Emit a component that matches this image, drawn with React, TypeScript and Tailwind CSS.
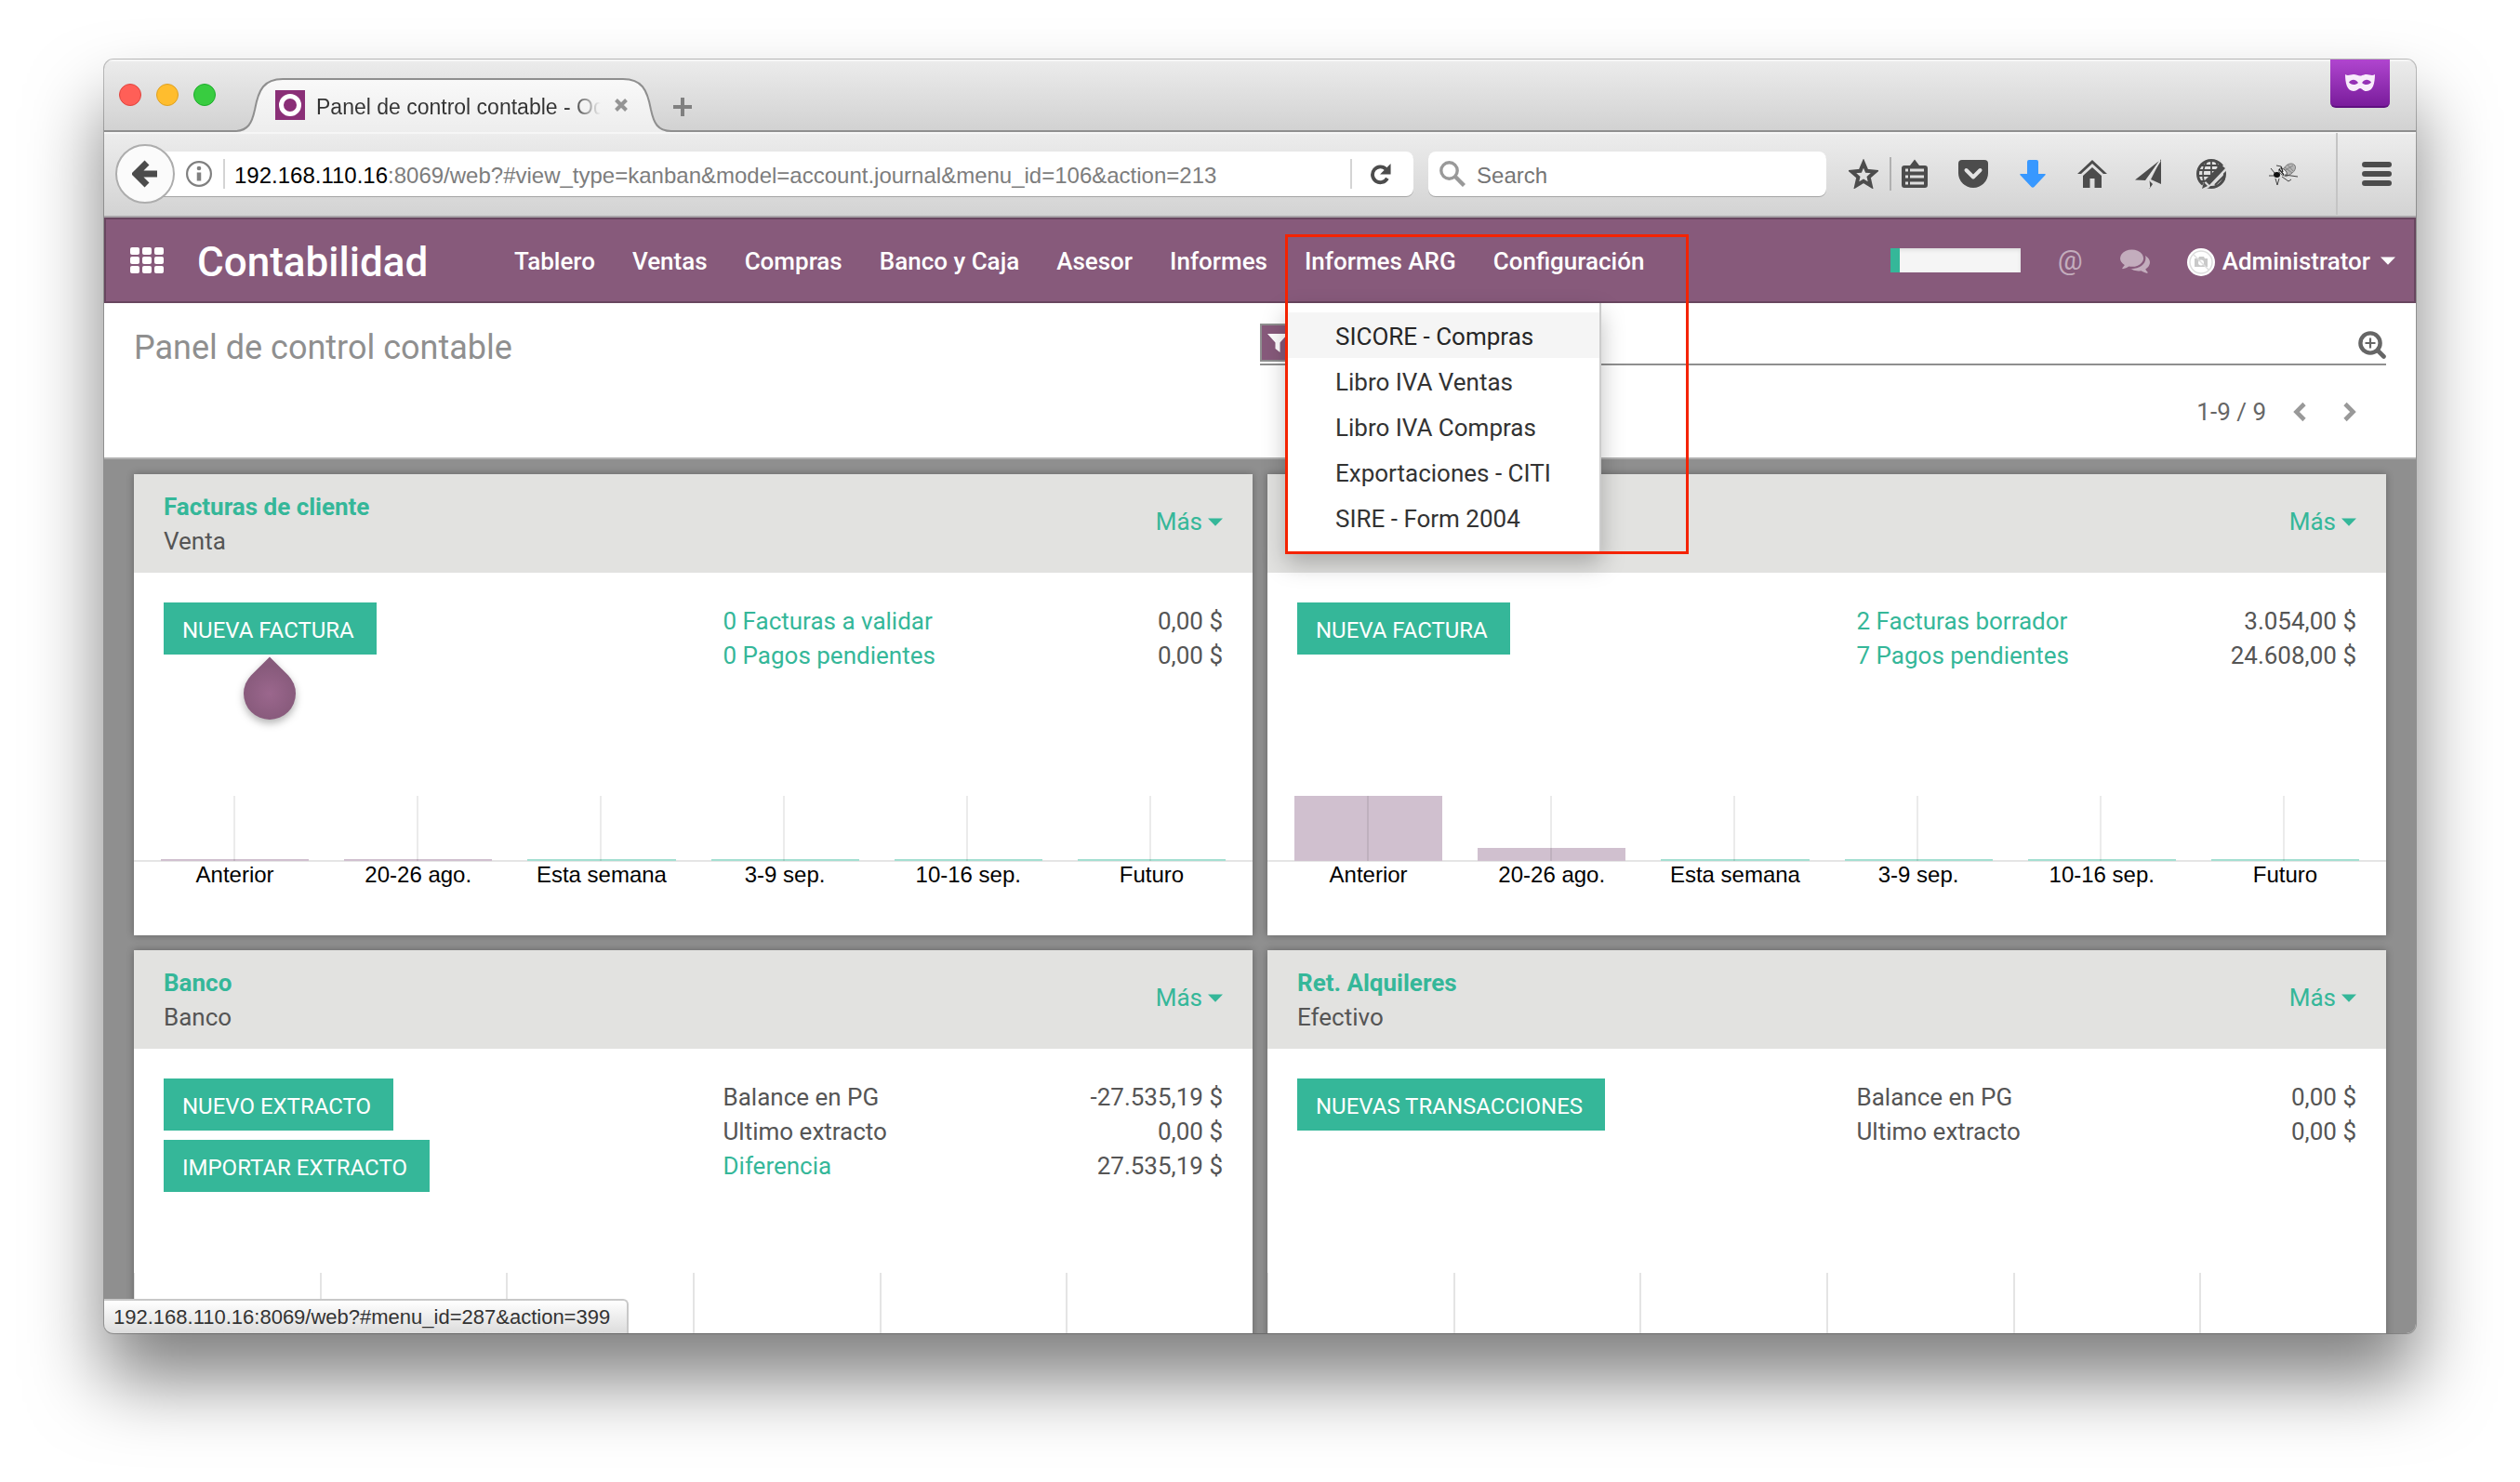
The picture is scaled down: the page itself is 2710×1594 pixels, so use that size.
import React from "react";

type Row = { label: string; value: string; link?: boolean };
type Bar = { label: string; height: number; tone: "past" | "future" };
type Journal = {
  title: string;
  kind: string;
  actions: string[];
  rows: Row[];
  bars?: Bar[];
  tip?: boolean;
};

const MENU = ["Tablero", "Ventas", "Compras", "Banco y Caja", "Asesor", "Informes", "Informes ARG", "Configuración"];
const SUBMENU = ["SICORE - Compras", "Libro IVA Ventas", "Libro IVA Compras", "Exportaciones - CITI", "SIRE - Form 2004"];

const makeBars = (first: number, second: number): Bar[] => [
  { label: "Anterior", height: first, tone: "past" },
  { label: "20-26 ago.", height: second, tone: "past" },
  { label: "Esta semana", height: 2, tone: "future" },
  { label: "3-9 sep.", height: 2, tone: "future" },
  { label: "10-16 sep.", height: 2, tone: "future" },
  { label: "Futuro", height: 2, tone: "future" },
];

const JOURNALS: Journal[] = [
  {
    title: "Facturas de cliente",
    kind: "Venta",
    actions: ["Nueva factura"],
    rows: [
      { label: "0 Facturas a validar", value: "0,00 $", link: true },
      { label: "0 Pagos pendientes", value: "0,00 $", link: true },
    ],
    bars: makeBars(2, 2),
    tip: true,
  },
  {
    title: "Facturas de proveedor",
    kind: "Compra",
    actions: ["Nueva factura"],
    rows: [
      { label: "2 Facturas borrador", value: "3.054,00 $", link: true },
      { label: "7 Pagos pendientes", value: "24.608,00 $", link: true },
    ],
    bars: makeBars(70, 14),
  },
  {
    title: "Banco",
    kind: "Banco",
    actions: ["Nuevo extracto", "Importar extracto"],
    rows: [
      { label: "Balance en PG", value: "-27.535,19 $" },
      { label: "Ultimo extracto", value: "0,00 $" },
      { label: "Diferencia", value: "27.535,19 $", link: true },
    ],
  },
  {
    title: "Ret. Alquileres",
    kind: "Efectivo",
    actions: ["Nuevas transacciones"],
    rows: [
      { label: "Balance en PG", value: "0,00 $" },
      { label: "Ultimo extracto", value: "0,00 $" },
    ],
  },
];

function Caret() {
  return (
    <svg className="h-[9px] w-4 fill-current" viewBox="0 0 16 9" aria-hidden="true">
      <path d="M0 .5h16L8 8.700z" />
    </svg>
  );
}

function TabStrip() {
  return (
    <div className="flex h-[78px] items-start border-b-2 border-[#8f8f8f] bg-gradient-to-b from-[#ececec] to-[#d2d2d2] pl-4 shadow-[inset_0_2px_0_#f6f6f6]">
      <div className="flex h-full items-center gap-4">
        <button aria-label="Cerrar" className="size-6 rounded-full border border-[#e0443e] bg-[#ff5f57]" />
        <button aria-label="Minimizar" className="size-6 rounded-full border border-[#dea123] bg-[#ffbd2e]" />
        <button aria-label="Ampliar" className="size-6 rounded-full border border-[#1dad2b] bg-[#38cc40]" />
      </div>
      <div className="relative ml-5 mt-5 flex h-[58px] w-[470px] items-center pl-11 pr-[46px]">
        <svg className="absolute inset-0 h-[58px] w-[470px]" viewBox="0 0 470 58" aria-hidden="true">
          <defs>
            <linearGradient id="tab" x1="0" y1="0" x2="0" y2="1">
              <stop offset="0" stopColor="#f9f9f9" />
              <stop offset="1" stopColor="#ededed" />
            </linearGradient>
          </defs>
          <path d="M0 59V57C15 57 19 48 22 34C26 12 32 1 52 1H418C438 1 444 12 448 34C451 48 455 57 470 57V59z" fill="url(#tab)" />
          <path d="M0 57C15 57 19 48 22 34C26 12 32 1 52 1H418C438 1 444 12 448 34C451 48 455 57 470 57" fill="none" stroke="#8f8f8f" strokeWidth="2" />
        </svg>
        <svg className="relative size-8 shrink-0" viewBox="0 0 32 32" aria-hidden="true">
          <path fill="#8a2f77" d="M0 0h32v32H0z" />
          <circle cx="16" cy="16" r="9.500" fill="none" stroke="#fff" strokeWidth="5" />
        </svg>
        <span className="relative ml-3 flex-1 overflow-hidden whitespace-nowrap bg-gradient-to-r from-[#333] from-90% to-transparent bg-clip-text pt-1 font-['Liberation_Sans',sans-serif] text-[23px] text-transparent">
          Panel de control contable - Odoo
        </span>
        <button aria-label="Cerrar pestaña" className="relative ml-3.5">
          <svg className="size-4" viewBox="0 0 16 16">
            <path d="M2.500 2.500l11 11M13.500 2.500l-11 11" stroke="#949494" strokeWidth="4" />
          </svg>
        </button>
      </div>
      <button aria-label="Nueva pestaña" className="ml-0.5 mt-[41px]">
        <svg className="size-5" viewBox="0 0 20 20">
          <path d="M10 0v20M0 10h20" stroke="#808080" strokeWidth="4" />
        </svg>
      </button>
      <div className="ml-auto mr-7 flex h-[52px] w-16 items-center justify-center rounded-b-md border-b-2 border-[#5f1080] bg-gradient-to-b from-[#b045cf] to-[#7a1c9c]">
        <svg className="h-[18px] w-8" viewBox="0 0 32 18" aria-hidden="true">
          <path
            fill="#f8ecfb"
            fillRule="evenodd"
            d="M0 0c3 2 6 0 9 0 3 0 5 1.500 7 1.500S20 0 23 0c3 0 6 2 9 0 0 9-2 18-9 18-4 0-5-3-7-3s-3 3-7 3C2 18 0 9 0 0zM4 8.500c3-4 7-3.500 10 .5-3 3-8 2.500-10-.5zM28 8.500c-3-4-7-3.500-10 .5 3 3 8 2.500 10-.5z"
          />
        </svg>
      </div>
    </div>
  );
}

function AddressBar() {
  return (
    <div className="flex h-[92px] items-center border-b-2 border-[#a9a5a9] bg-gradient-to-b from-[#ededed] to-[#d3d3d3] pl-3 shadow-[inset_0_2px_0_#f6f6f6]">
      <button aria-label="Atrás" className="relative z-10 flex size-16 shrink-0 items-center justify-center rounded-full border-2 border-[#adadad] bg-[#fbfbfb]">
        <svg className="h-[30px] w-7" viewBox="0 0 28 30">
          <path d="M16 3L4 15l12 12M5 15h22" fill="none" stroke="#4c4c4c" strokeWidth="7" />
        </svg>
      </button>
      <div className="-ml-4 flex h-12 flex-[1349] items-center rounded-r-lg bg-white pl-7 shadow-[0_1px_0_#a5a5a5]">
        <svg className="size-7 shrink-0" viewBox="0 0 28 28" aria-hidden="true">
          <circle cx="14" cy="14" r="12.900" fill="none" stroke="#808080" strokeWidth="2.200" />
          <path d="M14 12.500v9" stroke="#808080" strokeWidth="4.500" strokeLinecap="butt" />
          <circle cx="14" cy="8" r="2.300" fill="#808080" />
        </svg>
        <span className="ml-3 h-8 w-0.5 bg-[#d4d4d4]" />
        <span className="ml-2.5 flex-1 overflow-hidden whitespace-nowrap pt-1 font-['Liberation_Sans',sans-serif] text-2xl text-[#7d7d7d]">
          <span className="text-black">192.168.110.16</span>
          :8069/web?#view_type=kanban&amp;model=account.journal&amp;menu_id=106&amp;action=213
        </span>
        <span className="h-8 w-0.5 bg-[#d4d4d4]" />
        <button aria-label="Recargar" className="ml-5 mr-6">
          <svg className="h-6 w-[22px]" viewBox="0 0 24 26">
            <path d="M19.500 18.200A9.200 9.200 0 1 1 18 7.500" fill="none" stroke="#4c4c4c" strokeWidth="4.200" />
            <path d="M23.500 1v12.500H11z" fill="#4c4c4c" />
          </svg>
        </button>
      </div>
      <label className="ml-4 flex h-12 flex-[425] items-center rounded-lg bg-white pl-3 shadow-[0_1px_0_#a5a5a5]">
        <svg className="size-7 shrink-0" viewBox="0 0 28 28" aria-hidden="true">
          <circle cx="10.500" cy="10.500" r="8.700" fill="none" stroke="#999" strokeWidth="3.400" />
          <path d="M16.500 16.500l10 10" stroke="#999" strokeWidth="4.400" />
        </svg>
        <input
          aria-label="Search"
          placeholder="Search"
          className="ml-3 w-full min-w-0 bg-transparent pt-1 font-['Liberation_Sans',sans-serif] text-2xl outline-none placeholder:text-[#757575]"
        />
      </label>
      <div className="flex shrink-0 items-center pl-6 text-[#4c4c4c]">
        <button aria-label="Marcador">
          <svg className="size-8" viewBox="0 0 32 32">
            <path d="M16 4.500l3.500 8.300 9 .8-6.800 6 2 8.900-7.700-4.700-7.700 4.700 2-8.900-6.800-6 9-.8z" fill="none" stroke="currentColor" strokeWidth="4" />
          </svg>
        </button>
        <span className="ml-3 h-9 w-0.5 bg-[#b0b0b0]" />
        <button aria-label="Lista de marcadores" className="ml-2.5">
          <svg className="h-8 w-[30px]" viewBox="0 0 30 32">
            <path d="M10 7l5-6.500L20 7h6a3 3 0 0 1 3 3v18a3 3 0 0 1-3 3H4a3 3 0 0 1-3-3V10a3 3 0 0 1 3-3z" fill="currentColor" />
            <path d="M10 12h15M10 19h15M10 26h15" stroke="#dedede" strokeWidth="3" />
            <path d="M5 12h3M5 19h3M5 26h3" stroke="#dedede" strokeWidth="3" />
          </svg>
        </button>
        <button aria-label="Pocket" className="ml-8">
          <svg className="h-[30px] w-8" viewBox="0 0 32 30">
            <path d="M4 0h24a4 4 0 0 1 4 4v10a16 16 0 0 1-32 0V4a4 4 0 0 1 4-4z" fill="currentColor" />
            <path d="M8.500 11l7.500 7.500 7.500-7.500" fill="none" stroke="#e4e4e4" strokeWidth="4" strokeLinecap="round" strokeLinejoin="round" />
          </svg>
        </button>
        <button aria-label="Descargas" className="ml-[34px]">
          <svg className="h-[30px] w-7" viewBox="0 0 28 30">
            <path d="M8 2a2 2 0 0 1 2-2h8a2 2 0 0 1 2 2v13h7q1.500 0 .5 1.200L15.500 29q-1.500 1.500-3 0L.5 16.200Q-.5 15 1 15h7z" fill="#3898ff" />
          </svg>
        </button>
        <button aria-label="Inicio" className="ml-[34px]">
          <svg className="h-[30px] w-8" viewBox="0 0 32 30">
            <path d="M0 15L16 0l16 15h-4L16 4 4 15zM6 17L16 8l10 9v13h-7.500V20h-5v10H6z" fill="currentColor" />
          </svg>
        </button>
        <button aria-label="Enviar" className="ml-[30px]">
          <svg className="h-8 w-7" viewBox="0 0 28 32">
            <path d="M28 0v27l-11-5zM26 2L11 23 0 22.500zM15 23l4 4-3.500 5z" fill="currentColor" />
            <path d="M27 2L14.500 21l1 10" fill="none" stroke="#e4e4e4" strokeWidth="1.600" />
          </svg>
        </button>
        <button aria-label="Complemento web" className="ml-[38px]">
          <svg className="size-8" viewBox="0 0 32 32">
            <circle cx="16" cy="16" r="14.500" fill="none" stroke="currentColor" strokeWidth="3" />
            <path d="M3 12h24M2 18h16M6 7h20M5 24h8M16 2v18M11 3c-5 8-5 16-2 24M21 3c3 5 3 8 3 11" fill="none" stroke="currentColor" strokeWidth="1.800" />
            <path d="M33 3L7 27l-3 7 9-3 22-21z" fill="#dedede" />
            <path d="M26 6l5 4-17 18-5-5zM8 25l4 4-6 3z" fill="currentColor" />
            <path d="M20 28l10-10M24 28l6-6" stroke="currentColor" strokeWidth="2" />
          </svg>
        </button>
        <button aria-label="Firebug" className="ml-[46px]">
          <svg className="h-7 w-8" viewBox="0 0 32 28">
            <path d="M15 10c3-7 10-9 13-5 2 4-2 9-10 12z" fill="#b4b4b4" stroke="#7b7b7b" strokeWidth="1" />
            <path d="M17 7l8 6M20 4l6 7M16 11l10-6" stroke="#7b7b7b" strokeWidth=".8" />
            <ellipse cx="15" cy="12" rx="5" ry="3" fill="#f2f2f2" stroke="#444" strokeWidth=".8" transform="rotate(40 15 12)" />
            <path d="M13 6l2 6M11 9l5 6" stroke="#222" strokeWidth="1.200" />
            <ellipse cx="8.500" cy="15" rx="3.500" ry="3" fill="#111" />
            <path d="M6 13L2 8M5 16H0M7 19l2 7 2-7M14 17l7 5 3-2M17 15l14 2M13 6l-5-1" fill="none" stroke="#444" strokeWidth="1" />
          </svg>
        </button>
        <span className="ml-10 h-[88px] w-0.5 bg-[#c4c4c4]" />
        <button aria-label="Menú" className="mx-[26px] flex flex-col gap-1">
          <span className="h-1.5 w-8 rounded-sm bg-[#4c4c4c]" />
          <span className="h-1.5 w-8 rounded-sm bg-[#4c4c4c]" />
          <span className="h-1.5 w-8 rounded-sm bg-[#4c4c4c]" />
        </button>
      </div>
    </div>
  );
}

function ReportsMenu() {
  return (
    <>
      <ul className="absolute left-0 top-full z-20 w-[339px] border-r-2 border-[#ccc] bg-white pb-[13px] pt-2.5 font-normal text-[#333] shadow-[0_12px_24px_rgba(0,0,0,0.25)]">
        {SUBMENU.map((item, i) => (
          <li key={item}>
            <a
              href="#"
              className={i === 0 ? "block bg-[#f5f5f5] pl-[53px] pt-1 leading-[45px] text-[#262626]" : "block pl-[53px] pt-1 leading-[45px]"}
            >
              {item}
            </a>
          </li>
        ))}
      </ul>
      <div className="pointer-events-none absolute -left-px top-[18px] z-30 h-[344px] w-[434px] border-[3px] border-[#f42300]" />
    </>
  );
}

function NavBar() {
  return (
    <nav className="flex h-[92px] shrink-0 items-center bg-[#875a7b] pl-7 pr-[22px] font-medium text-white shadow-[inset_0_0_0_2px_#68465f]">
      <button aria-label="Aplicaciones">
        <svg className="h-7 w-9 fill-white" viewBox="0 0 36 28">
          {[0, 13, 26].map((x) => [0, 10, 20].map((y) => <rect key={`${x}-${y}`} x={x} y={y} width="10" height="8" rx="2" />))}
        </svg>
      </button>
      <a href="#" className="ml-9 w-[321px] shrink-0 pt-1 text-[44px]">
        Contabilidad
      </a>
      <ul className="flex">
        {MENU.map((item) => (
          <li key={item} className="relative whitespace-nowrap">
            <a href="#" className="block px-5 pt-0.5 leading-[90px]">
              {item}
            </a>
            {item === "Informes ARG" && <ReportsMenu />}
          </li>
        ))}
      </ul>
      <div className="ml-auto flex items-center">
        <div className="h-[26px] w-[140px] bg-[#f5f5f5] shadow-[inset_0_2px_4px_rgba(0,0,0,0.1)]">
          <div className="h-full w-2.5 bg-[#35b799]" />
        </div>
        <button aria-label="Menciones" className="ml-10 text-3xl font-normal text-[#c3adbd]">
          @
        </button>
        <button aria-label="Conversaciones" className="ml-10">
          <svg className="size-8 fill-[#c3adbd]" viewBox="0 0 1792 1792">
            <path d="M1408 768q0 139-94 257t-256.500 186.500-353.500 68.500q-86 0-176-16-124 88-278 128-36 9-86 16h-3q-11 0-20.500-8t-11.500-21q-1-3-1-6.500t.5-6.500 2-6l2.500-5t3.500-5.500 4-5 4.500-5 4-4.500q5-6 23-25t26-29.500 22.500-29 25-38.500 20.500-44q-124-72-195-177t-71-224q0-139 94-257t256.500-186.500 353.500-68.500 353.500 68.500 256.500 186.500 94 257zm384 256q0 120-71 224.500t-195 176.500q10 24 20.500 44t25 38.500 22.500 29 26 29.500 23 25q1 1 4 4.500t4.500 5 4 5 3.500 5.500l2.500 5t2 6 .5 6.500-1 6.500q-3 14-13 22t-22 7q-50-7-86-16-154-40-278-128-90 16-176 16-271 0-472-132 58 4 88 4 161 0 309-45t264-129q125-92 192-212t67-254q0-77-23-152 129 71 204 178t75 230z" />
          </svg>
        </button>
        <button className="ml-10 flex items-center">
          <svg className="mt-1 size-[30px]" viewBox="0 0 30 30" aria-hidden="true">
            <circle cx="15" cy="15" r="15" fill="#fff" />
            <circle cx="15" cy="15" r="12" fill="none" stroke="#ddd" strokeWidth="1.500" />
            <path d="M8 11h4l1-2h5l1 2h3v9H8z" fill="#c9c9c9" />
            <circle cx="15" cy="15.500" r="3" fill="#fff" />
            <path d="M6.500 6.500l17 17" stroke="#ddd" strokeWidth="1.500" />
          </svg>
          <span className="ml-2 mr-[11px] pt-0.5">Administrator</span>
          <Caret />
        </button>
      </div>
    </nav>
  );
}

function ControlPanel() {
  return (
    <header className="grid h-[168px] shrink-0 grid-cols-2 border-b-2 border-[#b0b0b0] bg-white">
      <h1 className="pl-8 pt-[26px] text-4xl leading-[44px] text-[#8f8f8f]">Panel de control contable</h1>
      <div className="pr-8 pt-[22px]">
        <div className="flex h-[45px] items-start justify-between border-b-2 border-[#8f8f8f]">
          <button aria-label="Filtros" className="flex h-[41px] w-[42px] items-center border-2 border-[#8f8f8f] bg-[#875a7b] pl-1.5">
            <svg className="h-5 w-[22px] fill-white" viewBox="0 0 22 20">
              <path d="M0 0h22l-8.500 9.500V20L8.500 16V9.500z" />
            </svg>
          </button>
          <input aria-label="Buscar" className="h-10 min-w-0 flex-1 bg-transparent px-4 outline-none" />
          <button aria-label="Búsqueda avanzada" className="mt-2">
            <svg className="size-[30px]" viewBox="0 0 30 30" fill="none" stroke="#666">
              <circle cx="13" cy="13" r="10.600" strokeWidth="4.400" />
              <path d="M21 21l6.500 6.500" strokeWidth="4.600" strokeLinecap="round" />
              <path d="M13 7.500v11M7.500 13h11" strokeWidth="2.200" />
            </svg>
          </button>
        </div>
        <div className="mt-[30px] flex items-center justify-end pr-8 leading-[40px] text-[#666]">
          <span>1-9 / 9</span>
          <button aria-label="Anterior" className="ml-[29px]">
            <svg className="h-[22px] w-3.5" viewBox="0 0 14 22">
              <path d="M12 2.500L3.500 11l8.500 8.500" fill="none" stroke="#999" strokeWidth="4.600" />
            </svg>
          </button>
          <button aria-label="Siguiente" className="ml-10">
            <svg className="h-[22px] w-3.5" viewBox="0 0 14 22">
              <path d="M2 2.500l8.500 8.500L2 19.500" fill="none" stroke="#999" strokeWidth="4.600" />
            </svg>
          </button>
        </div>
      </div>
    </header>
  );
}

function BarChart({ bars }: { bars: Bar[] }) {
  return (
    <div className="relative px-2.5 pb-[50px] font-['Liberation_Sans',sans-serif] text-2xl text-black">
      <div className="absolute inset-x-0 top-[69px] h-0.5 bg-[#e5e5e5]" />
      <div className="grid grid-cols-6">
        {bars.map((bar) => (
          <div key={bar.label} className="text-center">
            <div className="relative flex h-[70px] items-end px-[19px]">
              <div className={bar.tone === "past" ? "w-full bg-[#d0c0cf]" : "w-full bg-[#a4dfd1]"} style={{ height: bar.height }} />
              <div className="absolute left-1/2 top-0 h-[70px] w-0.5 -translate-x-0.5 bg-black/8" />
            </div>
            <div className="whitespace-nowrap leading-[30px]">{bar.label}</div>
          </div>
        ))}
      </div>
    </div>
  );
}

function LineChart() {
  return (
    <div className="overflow-hidden">
      <div className="-ml-px grid h-[150px] grid-cols-6">
        {[0, 1, 2, 3, 4, 5].map((i) => (
          <div key={i} className="border-l-2 border-[#e4e4e4]" />
        ))}
      </div>
    </div>
  );
}

function JournalCard({ journal }: { journal: Journal }) {
  return (
    <article className="bg-white text-[#555] shadow-[0_0_8px_rgba(0,0,0,0.3)]">
      <header className="flex items-start justify-between bg-[#e2e2e0] px-8 pb-[15px] pt-[17px]">
        <div>
          <h2 className="font-bold text-[#35b799]">
            <a href="#">{journal.title}</a>
          </h2>
          <p>{journal.kind}</p>
        </div>
        <button className="mt-4 flex items-center gap-1.5 text-[#35b799]">
          Más
          <Caret />
        </button>
      </header>
      <div className={journal.bars ? "grid h-[240px] grid-cols-2 pt-8" : "grid h-[241px] grid-cols-2 pt-8"}>
        <div className="flex flex-col items-start gap-2.5 pl-8">
          {journal.actions.map((action) => (
            <div key={action} className="relative">
              <button className="h-14 bg-[#35b799] pl-5 pr-6 pt-1 text-2xl uppercase text-white">{action}</button>
              {journal.tip && (
                <svg className="absolute left-1/2 top-[58px] h-[76px] w-[64px] -translate-x-1/2 overflow-visible drop-shadow-[0_4px_4px_rgba(0,0,0,0.3)]" viewBox="-32 0 64 76" aria-hidden="true">
                  <defs>
                    <radialGradient id="drop" cx="0" cy="40" r="30" gradientUnits="userSpaceOnUse">
                      <stop offset="0" stopColor="#9b678d" />
                      <stop offset="1" stopColor="#875a7b" />
                    </radialGradient>
                  </defs>
                  <path d="M0 0.400L19.800 20.200A28 28 0 1 1 -19.800 20.200z" fill="url(#drop)" />
                </svg>
              )}
            </div>
          ))}
        </div>
        <div className="px-8 pt-0.5">
          <table className="w-full">
            <tbody>
              {journal.rows.map((row) => (
                <tr key={row.label}>
                  <td className="p-0">
                    {row.link ? (
                      <a href="#" className="text-[#35b799]">
                        {row.label}
                      </a>
                    ) : (
                      row.label
                    )}
                  </td>
                  <td className="p-0 text-right">{row.value}</td>
                </tr>
              ))}
            </tbody>
          </table>
        </div>
      </div>
      {journal.bars ? <BarChart bars={journal.bars} /> : <LineChart />}
    </article>
  );
}

export default function App() {
  return (
    <div className="flex h-screen flex-col bg-white px-28 pb-40 pt-16 font-[Roboto,sans-serif] text-[26px] leading-[37px]">
      <div className="relative min-h-0 flex-1 rounded-[10px] shadow-[0_50px_80px_rgba(0,0,0,0.5),0_0_0_1px_rgba(0,0,0,0.25)]">
        <div className="flex h-full flex-col overflow-hidden rounded-[10px] bg-[#8f8f8f]">
          <TabStrip />
          <AddressBar />
          <NavBar />
          <ControlPanel />
          <main className="grid min-h-0 flex-1 grid-cols-2 content-start gap-4 px-8 pt-4">
            {JOURNALS.map((journal) => (
              <JournalCard key={journal.title} journal={journal} />
            ))}
          </main>
        </div>
        <div className="absolute bottom-0 left-0 rounded-bl-[10px] rounded-tr-md border-r-2 border-t-2 border-[#c8c8c8] bg-gradient-to-b from-white to-[#dcdcdc] pl-2.5 pr-[18px] font-['Liberation_Sans',sans-serif] text-[22px] leading-[35px] text-[#333]">
          192.168.110.16:8069/web?#menu_id=287&amp;action=399
        </div>
      </div>
    </div>
  );
}
